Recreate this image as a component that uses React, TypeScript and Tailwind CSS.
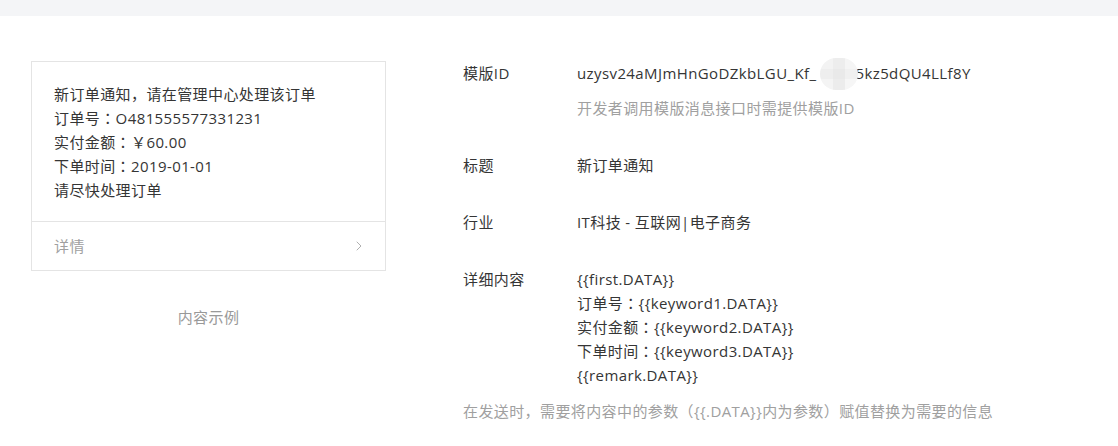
import { ChevronRight } from 'lucide-react'

// 全角冒号用 JP 字形（居中），与参考图一致
function Colon() {
  return <span style={{ fontFamily: '"Noto Sans CJK JP", sans-serif' }}>：</span>
}

const detailLines: [string, string][] = [
  ['', '{{first.DATA}}'],
  ['订单号', '{{keyword1.DATA}}'],
  ['实付金额', '{{keyword2.DATA}}'],
  ['下单时间', '{{keyword3.DATA}}'],
  ['', '{{remark.DATA}}'],
]

export default function App() {
  return (
    <div
      className="min-h-screen w-[1118px] bg-white text-[15px] leading-[24px] tracking-[0.4px] text-[#353535]"
      style={{ fontFamily: '"Open Sans", "Noto Sans CJK SC", sans-serif' }}
    >
      <div className="h-4 bg-[#f4f5f7]" />

      <div className="flex pt-[45px] pl-[31px]">
        {/* 示例卡片 */}
        <div className="w-[355px] shrink-0">
          <div className="border border-[#e4e4e4]">
            <div className="px-[22px] pt-5 pb-[19px]">
              <p>新订单通知，请在管理中心处理该订单</p>
              <p>
                订单号<Colon />O481555577331231
              </p>
              <p>
                实付金额<Colon />￥60.00
              </p>
              <p>
                下单时间<Colon />2019-01-01
              </p>
              <p>请尽快处理订单</p>
            </div>
            <div className="flex h-[49px] items-center justify-between border-t border-[#e4e4e4] pl-[22px] pr-[18px] text-[#a0a0a0]">
              <span>详情</span>
              <ChevronRight className="h-4 w-4 text-[#b0b0b0]" strokeWidth={1.5} />
            </div>
          </div>
          <p className="mt-[34px] text-center text-[#999]">内容示例</p>
        </div>

        {/* 模版信息 */}
        <div className="ml-[77px] flex-1">
          <div className="flex">
            <span className="w-[114px] shrink-0">模版ID</span>
            <div>
              <div className="relative">
                uzysv24aMJmHnGoDZkbLGU_Kf_<span className="inline-block w-[39px]" />5kz5dQU4LLf8Y
                <span className="absolute left-[243px] top-[-3px] grid h-[32px] w-[38px] grid-cols-3 grid-rows-3 overflow-hidden rounded-full">
                  <span className="bg-[#f3f3f3]" />
                  <span className="bg-[#ededed]" />
                  <span className="bg-[#f5f5f5]" />
                  <span className="bg-[#eeeeee]" />
                  <span className="bg-[#e9e9e9]" />
                  <span className="bg-[#f0f0f0]" />
                  <span className="bg-[#f4f4f4]" />
                  <span className="bg-[#ececec]" />
                  <span className="bg-[#f6f6f6]" />
                </span>
              </div>
              <p className="mt-[11px] text-[#a0a0a0]">开发者调用模版消息接口时需提供模版ID</p>
            </div>
          </div>

          <div className="mt-[33px] flex">
            <span className="w-[114px] shrink-0">标题</span>
            <span>新订单通知</span>
          </div>

          <div className="mt-[33px] flex">
            <span className="w-[114px] shrink-0">行业</span>
            <span>IT科技 - 互联网|电子商务</span>
          </div>

          <div className="mt-[33px] flex">
            <span className="w-[114px] shrink-0">详细内容</span>
            <div>
              {detailLines.map(([label, value]) => (
                <p key={value}>
                  {label && (
                    <>
                      {label}
                      <Colon />
                    </>
                  )}
                  {value}
                </p>
              ))}
            </div>
          </div>

          <p className="mt-3 text-[#a0a0a0]">
            在发送时，需要将内容中的参数（{'{{.DATA}}'}内为参数）赋值替换为需要的信息
          </p>
        </div>
      </div>
    </div>
  )
}
